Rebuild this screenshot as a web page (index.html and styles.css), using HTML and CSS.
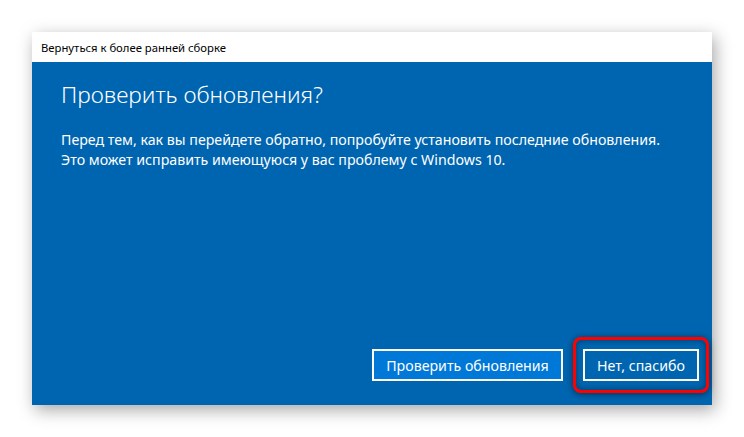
FILE: index.html
```html
<!DOCTYPE html>
<html lang="ru">
<head>
<meta charset="utf-8">
<link rel="stylesheet" href="styles.css">
</head>
<body>
<div class="window">
  <div class="titlebar">Вернуться к более ранней сборке</div>
  <div class="content">
    <h1 class="heading">Проверить обновления?</h1>
    <p class="text">Перед тем, как вы перейдете обратно, попробуйте установить последние обновления.<br>Это может исправить имеющуюся у вас проблему с Windows 10.</p>
    <div class="actions">
      <button class="btn btn-primary">Проверить обновления</button>
      <div class="highlight-wrap">
        <button class="btn btn-secondary">Нет, спасибо</button>
        <span class="highlight"></span>
      </div>
    </div>
  </div>
</div>
</body>
</html>
```
FILE: styles.css
```css
html, body {
  margin: 0;
  padding: 0;
  background: #ffffff;
}
body {
  padding: 32px;
  font-family: "Noto Sans", "Open Sans", sans-serif;
}
.window {
  width: 680px;
  height: 373px;
  display: flex;
  flex-direction: column;
  box-shadow: 3px 5px 16px rgba(0, 0, 0, 0.35);
}
.titlebar {
  height: 30px;
  flex: none;
  background: #ffffff;
  color: #000000;
  font-size: 11.3px;
  display: flex;
  align-items: center;
  padding-left: 9px;
}
.content {
  flex: 1;
  background: #0065b0;
  color: #ffffff;
  padding: 17px 13px 24px 29px;
  display: flex;
  flex-direction: column;
}
.heading {
  margin: 0;
  font-size: 22.7px;
  font-weight: 300;
  line-height: 32px;
}
.text {
  margin: 19px 0 0 0;
  font-size: 14.2px;
  line-height: 20px;
}
.actions {
  margin-top: auto;
  display: flex;
  justify-content: flex-end;
  align-items: center;
  gap: 20px;
}
.btn {
  box-sizing: border-box;
  font-family: inherit;
  font-size: 14.2px;
  color: #ffffff;
  height: 32px;
  border: 2px solid #ffffff;
  padding: 0;
  margin: 0;
  white-space: nowrap;
  display: flex;
  align-items: center;
  justify-content: center;
}
.btn-primary {
  background: #0078d7;
  width: 191px;
}
.btn-secondary {
  background: #0065b0;
  width: 116px;
}
.highlight-wrap {
  position: relative;
  display: flex;
}
.highlight {
  position: absolute;
  left: -10px;
  right: -10px;
  top: -12px;
  bottom: -12px;
  border: 3px solid #ff0000;
  border-radius: 8px;
  box-shadow: 0 1px 7px rgba(0, 0, 0, 0.55), inset 0 0 6px rgba(0, 0, 0, 0.45);
  pointer-events: none;
}
```
